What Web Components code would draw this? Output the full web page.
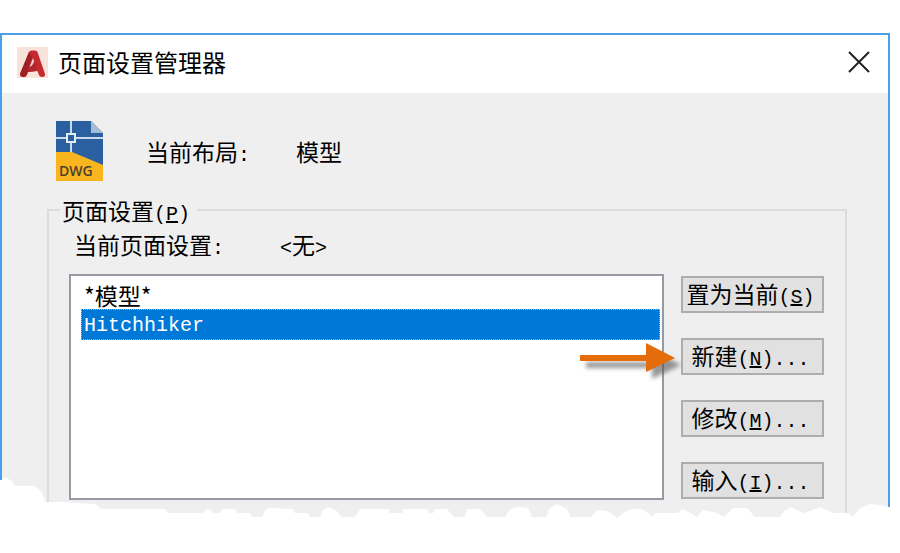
<!DOCTYPE html>
<html lang="zh-CN">
<head>
<meta charset="utf-8">
<title>页面设置管理器</title>
<style>
    body {
        margin: 0;
        padding: 33px 10px 0 0;
        background: #fff;
        color: #000;
        font: 23px/30px 'Noto Sans CJK SC', sans-serif;
    }
</style>
</head>
<body>
<dialog-window heading="页面设置管理器">
    <layout-info label="当前布局">模型</layout-info>
    <page-setups></page-setups>
</dialog-window>

<script>
class DialogWindow extends HTMLElement {
    constructor() {
        super();
        this.attachShadow({ mode: 'open' });

        this.shadowRoot.innerHTML = `
            <style>
                :host {
                    display: block;
                    position: relative;
                    border: 2px solid #4a9fe8;
                    border-bottom: none;
                    background: #efefef;
                }
                header {
                    display: flex;
                    align-items: center;
                    gap: 10px;
                    height: 58px;
                    padding: 0 18px 4px 15px;
                    box-sizing: border-box;
                    background: #fff;
                }
                h1 {
                    flex: 1;
                    margin: 0;
                    font-size: 24px;
                    font-weight: 400;
                }
                button {
                    display: flex;
                    padding: 0;
                    border: none;
                    background: none;
                }
                main {
                    padding: 28px 41px 0 45px;
                }
                .torn {
                    position: absolute;
                    left: -2px;
                    bottom: 0;
                    width: calc(100% + 4px);
                    height: 50px;
                    pointer-events: none;
                }
            </style>
            <header>
                <svg width="31" height="31" viewBox="0 0 31 31" aria-hidden="true">
                    <rect width="31" height="31" fill="#f8e3da"/>
                    <path d="M3 27 12 5Q12.500 3.500 14.500 3.500H18Q20 3.500 20.500 5L28 27Q28.500 30 25 30 22.500 30 21.500 27L20.500 24 11 25 10 27.500Q9 30 6.500 30 3 30 3 27Z" fill="#c52a30"/>
                    <path d="M3 27 12 5 15 10 10 27.500Q9 30 6.500 30 3 30 3 27Z" fill="#9f2026"/>
                    <path d="M16 11 18.500 18 12.500 20Z" fill="#f1cfc7"/>
                    <path d="M11 21Q17 18 17.500 13L20 20 19 24 11 25Z" fill="#b0272d"/>
                </svg>
                <h1></h1>
                <button aria-label="关闭">
                    <svg width="22" height="22" viewBox="0 0 22 22">
                        <path d="M1 1 21 21M21 1 1 21" stroke="#222" stroke-width="2" fill="none"/>
                    </svg>
                </button>
            </header>
            <main><slot></slot></main>
            <svg class="torn" viewBox="0 470 890 50" preserveAspectRatio="none" aria-hidden="true">
                <path fill="#fff" d="M0 480 2 480 5 477 12 481 15 486 35 486 41 491 46 502 63 502 95 504 101 509 165 509
                    168 513 203 513 206 509 211 510 213 513 220 513 222 509 235 509 237 513 250 513 252 517 262 517
                    265 510 270 508 293 509 295 513 308 513 310 517 320 517 323 510 329 507 337 511 341 517 355 517
                    360 509 388 509 390 513 402 513 404 509 427 509 429 513 433 513 435 509 447 509 454 517 464 517
                    468 509 480 509 487 517 505 517 510 509 518 507 528 508 532 517 546 517 549 509 557 504 567 509
                    571 517 591 517 597 510 607 511 611 513 617 518 623 513 632 509 642 509 648 513 652 517 655 513
                    678 513 682 509 691 513 697 517 703 510 717 513 724 517 733 508 747 508 755 517 780 517 784 511
                    791 507 803 513 810 511 820 507 833 513 848 513 853 517 860 508 870 504 887 506 888 507 890 507
                    V521H0Z"/>
            </svg>
        `;
    }

    connectedCallback() {
        this.shadowRoot.querySelector('h1').textContent = this.getAttribute('heading');
    }
}

class LayoutInfo extends HTMLElement {
    constructor() {
        super();
        this.attachShadow({ mode: 'open' });

        this.shadowRoot.innerHTML = `
            <style>
                :host {
                    display: flex;
                    align-items: center;
                    padding-left: 9px;
                }
                .name {
                    width: 150px;
                    padding-left: 43px;
                }
                .latin {
                    font-family: 'Liberation Mono', monospace;
                    font-size: 20px;
                    line-height: 20px;
                }
            </style>
            <svg width="47" height="60" viewBox="0 0 47 60" aria-hidden="true">
                <path d="M0 0H35L47 12V60H0Z" fill="#2b60a0"/>
                <path d="M35 0 47 12H35Z" fill="#a3bdd9"/>
                <path d="M0 31H16L47 44V60H0Z" fill="#f8b51e"/>
                <path d="M15 0V12M15 22V31M0 17H10M20 17H47" stroke="#c9daea" stroke-width="2"/>
                <rect x="11" y="13" width="8" height="8" fill="none" stroke="#e2ecf5" stroke-width="2"/>
                <text x="3" y="55" font-family="Open Sans, sans-serif" font-size="14" font-weight="600" fill="#4b4030">DWG</text>
            </svg>
            <span class="name"><span id="label"></span><span class="latin">:</span></span>
            <slot></slot>
        `;
    }

    connectedCallback() {
        this.shadowRoot.getElementById('label').textContent = this.getAttribute('label');
    }
}

class SetupButton extends HTMLElement {
    constructor() {
        super();
        this.attachShadow({ mode: 'open' });

        this.shadowRoot.innerHTML = `
            <style>
                :host {
                    display: block;
                }
                button {
                    width: 100%;
                    height: 37px;
                    padding: 0 4px 4px 0;
                    border: 2px solid #adadad;
                    background: #e1e1e1;
                    color: inherit;
                    font: inherit;
                    line-height: 30px;
                    white-space: nowrap;
                }
                button:hover {
                    border-color: #0078d7;
                    background: #e5f1fb;
                }
                .latin {
                    font-family: 'Liberation Mono', monospace;
                    font-size: 20px;
                    line-height: 20px;
                }
            </style>
            <button><slot></slot><span class="latin">(<u></u>)<span id="more"></span></span></button>
        `;
    }

    connectedCallback() {
        this.shadowRoot.querySelector('u').textContent = this.getAttribute('key');
        if (this.hasAttribute('more')) {
            this.shadowRoot.getElementById('more').textContent = '...';
        }
    }
}

class PageSetups extends HTMLElement {
    constructor() {
        super();
        this.attachShadow({ mode: 'open' });

        this.shadowRoot.innerHTML = `
            <style>
                :host {
                    display: block;
                    padding-top: 14px;
                }
                fieldset {
                    min-width: 0;
                    margin: 0;
                    padding: 4px 21px 20px 20px;
                    border: 2px solid #dcdcdc;
                    border-bottom: none;
                }
                legend {
                    margin-left: -9px;
                    padding: 0 7px 0 2px;
                }
                .latin {
                    font-family: 'Liberation Mono', monospace;
                    font-size: 20px;
                    line-height: 20px;
                }
                .current {
                    display: flex;
                    padding-left: 5px;
                }
                .current label {
                    width: 206px;
                }
                .content {
                    display: grid;
                    grid-template-columns: 1fr 143px;
                    gap: 17px;
                    padding-top: 15px;
                }
                .list {
                    position: relative;
                    display: grid;
                }
                select {
                    width: 100%;
                    height: 226px;
                    padding: 2px 2px 2px 10px;
                    border: 2px solid #979aa5;
                    border-radius: 0;
                    box-sizing: border-box;
                    outline: none;
                    background: #fff;
                    color: #000;
                    font: inherit;
                    overflow: hidden;
                }
                option {
                    height: 31px;
                    min-height: 31px;
                    padding: 0 3px;
                    box-sizing: border-box;
                }
                option:checked {
                    padding-top: 5px;
                    outline: 1px dotted #ffa04a;
                    outline-offset: -1px;
                    background: linear-gradient(#0078d7, #0078d7);
                    -webkit-text-fill-color: #fff;
                    font-family: 'Liberation Mono', monospace;
                    font-size: 20px;
                }
                .arrow {
                    position: absolute;
                    top: 66px;
                    right: -18px;
                    pointer-events: none;
                }
                .actions {
                    display: flex;
                    flex-direction: column;
                    gap: 25px;
                    padding-top: 2px;
                }
            </style>
            <fieldset>
                <legend>页面设置<span class="latin">(<u>P</u>)</span></legend>
                <div class="current">
                    <label for="setups">当前页面设置<span class="latin">:</span></label>
                    <span><span class="latin">&lt;</span>无<span class="latin">&gt;</span></span>
                </div>
                <div class="content">
                    <div class="list">
                        <select id="setups" size="7">
                            <option>*模型*</option>
                            <option selected>Hitchhiker</option>
                        </select>
                        <svg class="arrow" width="108" height="46" viewBox="0 0 108 46" aria-hidden="true">
                            <defs>
                                <filter id="soft" x="-20%" y="-40%" width="140%" height="180%">
                                    <feGaussianBlur stdDeviation="2"/>
                                </filter>
                            </defs>
                            <path d="M6 15H72V3L101 18 72 32V21H6Z" transform="translate(6 7)" fill="#555" opacity="0.6" filter="url(#soft)"/>
                            <path d="M6 15H72V3L101 18 72 32V21H6Z" fill="#e46c0a"/>
                        </svg>
                    </div>
                    <div class="actions">
                        <setup-button key="S">置为当前</setup-button>
                        <setup-button key="N" more>新建</setup-button>
                        <setup-button key="M" more>修改</setup-button>
                        <setup-button key="I" more>输入</setup-button>
                    </div>
                </div>
            </fieldset>
        `;
    }
}

customElements.define('dialog-window', DialogWindow);
customElements.define('layout-info', LayoutInfo);
customElements.define('setup-button', SetupButton);
customElements.define('page-setups', PageSetups);
</script>
</body>
</html>
